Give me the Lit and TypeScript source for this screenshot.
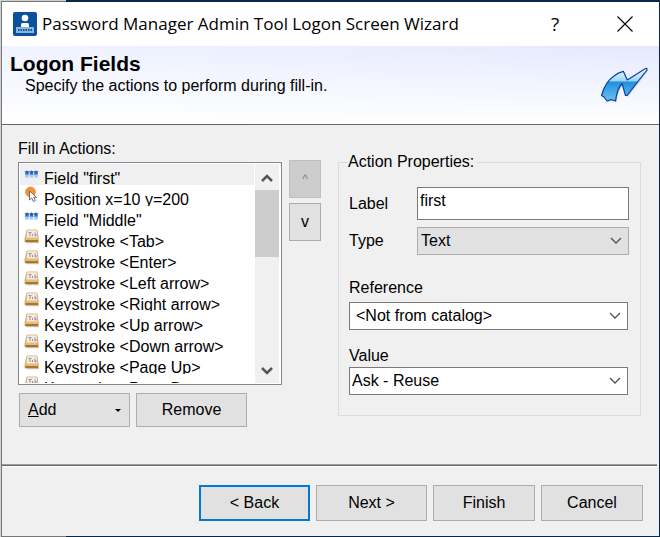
import { LitElement, html, css, svg } from "lit";
import { customElement, state } from "lit/decorators.js";
import { classMap } from "lit/directives/class-map.js";

type Kind = "field" | "position" | "key";
interface Action {
  kind: Kind;
  text: string;
}

const ACTIONS: Action[] = [
  { kind: "field", text: 'Field "first"' },
  { kind: "position", text: "Position x=10 y=200" },
  { kind: "field", text: 'Field "Middle"' },
  { kind: "key", text: "Keystroke <Tab>" },
  { kind: "key", text: "Keystroke <Enter>" },
  { kind: "key", text: "Keystroke <Left arrow>" },
  { kind: "key", text: "Keystroke <Right arrow>" },
  { kind: "key", text: "Keystroke <Up arrow>" },
  { kind: "key", text: "Keystroke <Down arrow>" },
  { kind: "key", text: "Keystroke <Page Up>" },
  { kind: "key", text: "Keystroke <Page Down>" },
];

const star = (x: number) => svg`
  <path d="M${x - 2.5} 7.500l2-.5.5-1 .5 1 2 .5-1 1.500.5 2h-4l.5-2z" fill="#2c62b8"/>
  <path d="M${x - 2} 10.500h4l-.6 3.200h-2.800z" fill="#a3cbef"/>`;

const ICONS = {
  field: html`<svg class="icon" viewBox="0 0 16 20" aria-hidden="true">
    ${star(3)}${star(7.5)}${star(12)}
  </svg>`,
  position: html`<svg class="icon" viewBox="0 0 16 20" aria-hidden="true">
    <circle cx="6.500" cy="7" r="5" fill="#f59433" stroke="#e0802a" stroke-width=".6"/>
    <path d="M5.500 6v9l2.200-2 1.700 3.600 2-1-1.700-3.300h2.800z" fill="#fff" stroke="#6b6b72" stroke-width="1"/>
  </svg>`,
  key: html`<svg class="icon" viewBox="0 0 16 20" aria-hidden="true">
    <path d="M2 15h13v1.200H3z" fill="#cfccc6"/>
    <path d="M3 3h10l1.200 8.500V15H1V11.500z" fill="#e6bd78" stroke="#b99a68" stroke-width=".7"/>
    <path d="M3.300 3.300h9.400l.7 7.200H2.500z" fill="#f9ead0"/>
    <path d="M1.500 14h12.500" stroke="#a8762f" stroke-width="2"/>
    <path d="M4.500 5.500h3M6 5.500v3.500M8.500 7v2M11 5.500v3.500h1V7" stroke="#8f8fd8" fill="none" stroke-width="1"/>
  </svg>`,
};

const chevron = html`<svg class="chevron" viewBox="0 0 12 8" aria-hidden="true">
  <path d="M1 1l5 5 5-5" fill="none" stroke="#505050" stroke-width="1.300"/>
</svg>`;

const LOGO_PATH =
  "M601.500 95.500C603.500 88 608 80 614 76C617 73.500 620 72 623.300 71.300L627.300 80L645.500 68.500Q648 68 646.500 70.500L627 95.500H625.500L622 83.500Q617 89 615.500 101L611 99.500L607 101L604 97Z";

@customElement("app-root")
export class AppRoot extends LitElement {
  @state() private selected = 0;

  static styles = css`
    :host {
      display: flex;
      flex-direction: column;
      min-height: 100vh;
      box-sizing: border-box;
      padding: 2px 1px 1px 2px;
      font: 16px/18px "Liberation Sans", Arial, sans-serif;
      color: #000;
      background:
        linear-gradient(#777, #777) 1px 1px / 65px 1px no-repeat,
        linear-gradient(#777, #777) 1px 100% / 65px 1px no-repeat,
        linear-gradient(#777, #777) 1px 1px / 1px 100% no-repeat,
        linear-gradient(90deg, #d0d0d0 66px, #06264a 66px);
    }
    * { box-sizing: border-box; }
    button, input, select { font: inherit; color: inherit; margin: 0; border-radius: 0; }
    .titlebar {
      display: flex;
      align-items: center;
      height: 44px;
      padding: 0 24px 0 11px;
      background: #fff;
    }
    .app-icon { width: 24px; height: 24px; flex: none; }
    .title {
      flex: 1;
      margin: 0 0 0 5px;
      font: 17px/26px "Open Sans", "Noto Sans", sans-serif;
      white-space: nowrap;
    }
    .caption {
      border: 0;
      padding: 0;
      background: none;
      width: 20px;
      height: 26px;
      display: grid;
      place-items: center;
      font: 19px/26px "Open Sans", sans-serif;
    }
    .help { margin-right: 50px; }
    .cross { width: 16px; height: 16px; }
    .banner {
      display: flex;
      justify-content: space-between;
      height: 79px;
      padding: 5px 9px 0 8px;
      border-bottom: 1px solid #696969;
      background:
        linear-gradient(rgba(255, 255, 255, 0), #fff),
        linear-gradient(90deg, #f0f3ff, #e4e9fe);
    }
    .heading { margin: 0; font-size: 21px; line-height: 26px; font-weight: bold; }
    .sub { margin: 0 0 0 15px; }
    .logo { width: 50px; height: 38px; margin-top: 15px; }
    .content {
      flex: 1;
      display: grid;
      grid-template-columns: 264fr 39px 320fr;
      align-items: start;
      padding: 14px 18px 0 16px;
      background: #f0f0f0;
    }
    .caption-text { display: block; line-height: 20px; margin-bottom: 3px; }
    .listbox {
      display: flex;
      height: 223px;
      padding: 1px;
      border: 1px solid #828790;
      background: #fff;
    }
    .items {
      flex: 1;
      min-width: 0;
      margin: 0;
      padding: 0;
      list-style: none;
      overflow: hidden;
    }
    .item {
      display: flex;
      height: 21px;
      padding-left: 4px;
      overflow: hidden;
      white-space: nowrap;
      line-height: 29px;
      cursor: default;
    }
    .item.on { background: #f0f0f0; }
    .icon { width: 16px; height: 20px; margin-right: 4px; flex: none; }
    .scroll {
      width: 25px;
      padding-right: 1px;
      margin-left: 1px;
      display: flex;
      flex-direction: column;
    }
    .scroll-inner {
      flex: 1;
      display: flex;
      flex-direction: column;
      background: #f0f0f0;
    }
    .arrow {
      height: 26px;
      border: 0;
      padding: 2px 0 0;
      background: none;
      display: grid;
      place-items: center;
    }
    .arrow svg { width: 12px; height: 10px; }
    .track { flex: 1; }
    .thumb { height: 67px; background: #cdcdcd; }
    .btn {
      border: 1px solid #adadad;
      background: #e1e1e1;
      padding: 0 8px;
      height: 34px;
    }
    .btn:disabled { background: #ccc; border-color: #bfbfbf; color: #838383; }
    .row { display: flex; gap: 6px; margin: 8px 0 0 1px; }
    .row .btn { width: 111px; }
    .add { display: flex; align-items: center; justify-content: space-between; }
    .caret { width: 6px; height: 3px; }
    .movers { display: grid; gap: 5px; margin: 21px 0 0 7px; }
    .movers .btn { height: 38px; padding: 0; }
    .movers .up { font-size: 12px; }
    .props {
      margin: 13px 0 0 17px;
      min-width: 0;
      border: 1px solid #dcdcdc;
      padding: 15px 11px 20px 10px;
    }
    .props legend { padding: 0 3px 0 1px; margin-left: -2px; line-height: 20px; }
    .pair { display: flex; align-items: center; margin-bottom: 7px; }
    .pair label { width: 68px; flex: none; line-height: 20px; }
    .text {
      flex: 1;
      min-width: 0;
      height: 33px;
      border: 1px solid #7a7a7a;
      padding: 0 2px 6px;
      background: #fff;
    }
    .combo { flex: 1; display: grid; align-items: center; }
    .combo > * { grid-area: 1 / 1; }
    .combo select {
      appearance: none;
      width: 100%;
      height: 28px;
      padding: 0 30px 0 2px;
      border: 1px solid #7a7a7a;
      background: #fff;
    }
    .combo .flat { background: #e1e1e1; border-color: #adadad; padding-left: 3px; }
    .combo .inset { padding-left: 6px; }
    .chevron { width: 12px; height: 8px; justify-self: end; margin-right: 7px; pointer-events: none; }
    .stack { margin-right: 1px; }
    .stack label { display: block; line-height: 20px; }
    .reference { margin-top: 23px; }
    .reference label { margin-bottom: 4px; }
    .value { margin-top: 16px; }
    .value label { margin-bottom: 1px; }
    .footer {
      background: #f0f0f0;
      padding: 0 16px 15px;
    }
    .rule {
      height: 3px;
      margin: 0 -14px 18px -16px;
      border: 0;
      border-top: 1px solid #a0a0a0;
      border-bottom: 1px solid #fff;
      background: #696969;
    }
    .nav { display: flex; justify-content: flex-end; gap: 6px; }
    .nav .btn { width: 102px; height: 36px; }
    .nav .wide { width: 111px; }
    .nav .default { border: 2px solid #0078d7; }
  `;

  render() {
    return html`
      <header class="titlebar">
        <svg class="app-icon" viewBox="0 0 24 24" aria-hidden="true">
          <rect width="24" height="24" rx="2" fill="#0b529d"/>
          <circle cx="12" cy="6" r="3.300" fill="#fff"/>
          <path d="M8 15v-2.500q0-1.500 1.500-1.500h5q1.500 0 1.500 1.500V15z" fill="#fff"/>
          <path d="M3 15h18v6H3z" fill="#8db4dd"/>
          <path d="M5 18h15" stroke="#0b529d" stroke-width="2" stroke-dasharray="1.500 1"/>
        </svg>
        <h1 class="title">Password Manager Admin Tool Logon Screen Wizard</h1>
        <button class="caption help" aria-label="Help">?</button>
        <button class="caption" aria-label="Close">
          <svg class="cross" viewBox="0 0 16 16"><path d="M.5.5l15 15M15.500.5l-15 15" stroke="#000" stroke-width="1.100"/></svg>
        </button>
      </header>
      <section class="banner">
        <div>
          <h2 class="heading">Logon Fields</h2>
          <p class="sub">Specify the actions to perform during fill-in.</p>
        </div>
        <svg class="logo" viewBox="600 66 50 38" aria-hidden="true">
          <defs>
            <linearGradient id="g" x1="0" y1="0" x2="0" y2="1">
              <stop offset="0" stop-color="#fff"/>
              <stop offset=".38" stop-color="#9bd4f5"/>
              <stop offset=".42" stop-color="#1f90dc"/>
              <stop offset="1" stop-color="#6cc2f2"/>
            </linearGradient>
          </defs>
          <path transform="translate(1 1)" fill="#9fabc8" opacity=".7" d=${LOGO_PATH}/>
          <path fill="url(#g)" stroke="#0c3fa6" stroke-width="1.200" stroke-linejoin="round" d=${LOGO_PATH}/>
        </svg>
      </section>
      <main class="content">
        <div>
          <span class="caption-text" id="list-label">Fill in Actions:</span>
          <div class="listbox">
            <ul class="items" role="listbox" aria-labelledby="list-label">
              ${ACTIONS.map(
                (a, i) => html`<li
                  class=${classMap({ item: true, on: i === this.selected })}
                  role="option"
                  aria-selected=${i === this.selected}
                  @click=${() => (this.selected = i)}
                >${ICONS[a.kind]}<span>${a.text}</span></li>`
              )}
            </ul>
            <div class="scroll">
              <div class="scroll-inner">
                <button class="arrow" aria-label="Scroll up">
                  <svg viewBox="0 0 12 10"><path d="M1 8l5-5 5 5" fill="none" stroke="#555" stroke-width="2.500"/></svg>
                </button>
                <div class="track"><div class="thumb"></div></div>
                <button class="arrow" aria-label="Scroll down">
                  <svg viewBox="0 0 12 10"><path d="M1 2l5 5 5-5" fill="none" stroke="#555" stroke-width="2.500"/></svg>
                </button>
              </div>
            </div>
          </div>
          <div class="row">
            <button class="btn add"><span><u>A</u>dd</span>
              <svg class="caret" viewBox="0 0 6 3" aria-hidden="true"><path d="M0 0h6L3 3z"/></svg>
            </button>
            <button class="btn">Remove</button>
          </div>
        </div>
        <div class="movers">
          <button class="btn up" aria-label="Move up" disabled>^</button>
          <button class="btn" aria-label="Move down">v</button>
        </div>
        <fieldset class="props">
          <legend>Action Properties:</legend>
          <div class="pair">
            <label for="label">Label</label>
            <input class="text" id="label" type="text" value="first" />
          </div>
          <div class="pair">
            <label for="type">Type</label>
            <div class="combo">
              <select class="flat" id="type"><option>Text</option></select>${chevron}
            </div>
          </div>
          <div class="stack reference">
            <label for="reference">Reference</label>
            <div class="combo">
              <select class="inset" id="reference"><option>&lt;Not from catalog&gt;</option></select>${chevron}
            </div>
          </div>
          <div class="stack value">
            <label for="value">Value</label>
            <div class="combo">
              <select id="value"><option>Ask - Reuse</option></select>${chevron}
            </div>
          </div>
        </fieldset>
      </main>
      <footer class="footer">
        <hr class="rule" />
        <div class="nav">
          <button class="btn wide default">&lt; Back</button>
          <button class="btn wide">Next &gt;</button>
          <button class="btn">Finish</button>
          <button class="btn">Cancel</button>
        </div>
      </footer>
    `;
  }
}
